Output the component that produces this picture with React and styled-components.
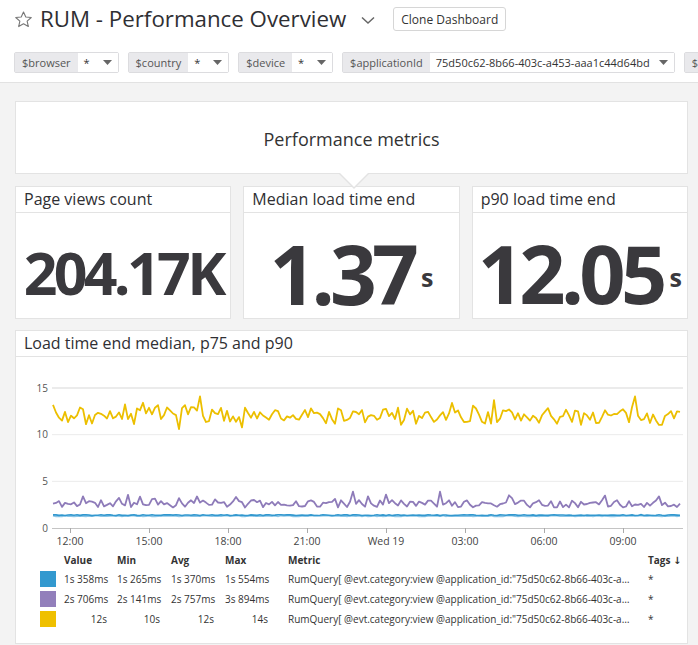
import React from 'react'
import styled, { createGlobalStyle } from 'styled-components'

const GlobalStyle = createGlobalStyle`
  html, body {
    margin: 0;
    padding: 0;
    background: #f3f3f3;
    font-family: "Open Sans", "DejaVu Sans", sans-serif;
    color: #333;
  }
  * { box-sizing: border-box; }
`

const Header = styled.header`
  background: #fff;
  border-bottom: 1px solid #e2e2e2;
  height: 83px;
  padding: 5px 0 0 14px;
  overflow: hidden;
`

const TitleRow = styled.div`
  display: flex;
  align-items: center;
  height: 28px;
`

const Title = styled.h1`
  margin: 0 0 0 7px;
  font-size: 22.3px;
  font-weight: 400;
  color: #2f2f33;
  line-height: 28px;
`

const Chevron = styled.svg`
  margin-left: 15px;
  margin-top: 2px;
`

const CloneButton = styled.button`
  margin-left: 18px;
  height: 24px;
  padding: 0 7px;
  background: #fff;
  border: 1px solid #d6d6d6;
  border-radius: 3px;
  font-family: inherit;
  font-size: 12px;
  color: #333;
`

const VarRow = styled.div`
  display: flex;
  gap: 9px;
  margin-top: 19px;
  white-space: nowrap;
`

const VarPill = styled.div`
  display: flex;
  flex-shrink: 0;
  height: 21px;
  border: 1px solid #dcdcdf;
  border-radius: 2px;
  font-size: 11px;
  line-height: 19px;
`

const VarLabel = styled.span`
  background: #e9e9ec;
  color: #555;
  padding: 0 7px;
`

const VarValue = styled.span`
  display: flex;
  align-items: center;
  width: ${p => p.$width}px;
  padding: 0 6px 0 6px;
  background: #fff;
  color: #333;
  svg { margin-left: auto; }
`

const Board = styled.main`
  padding: 18px 10px 4px 15px;
`

const Note = styled.div`
  position: relative;
  z-index: 2;
  height: 73px;
  background: #fff;
  border: 1px solid #e3e3e3;
  display: flex;
  align-items: center;
  justify-content: center;
  font-size: 18px;
  color: #333;
  padding-top: 2px;

  &::before, &::after {
    content: '';
    position: absolute;
    left: 322px;
    border-style: solid;
    border-color: transparent;
  }
  &::before {
    top: 100%;
    border-width: 16px 16px 0 16px;
    border-top-color: #e3e3e3;
  }
  &::after {
    top: calc(100% - 1px);
    left: 323px;
    border-width: 15px 15px 0 15px;
    border-top-color: #fff;
  }
`

const ValueGrid = styled.div`
  display: grid;
  grid-template-columns: repeat(3, 1fr);
  gap: 12px;
  margin-top: 12px;
`

const Widget = styled.section`
  background: #fff;
  border: 1px solid #e3e3e3;
  display: flex;
  flex-direction: column;
  height: ${p => p.$height}px;
  margin-top: ${p => p.$top || 0}px;
`

const WidgetTitle = styled.div`
  height: 26px;
  flex-shrink: 0;
  border-bottom: 1px solid #e3e3e3;
  padding: 0 8px;
  font-size: 16px;
  line-height: 25px;
  color: #2f2f33;
  white-space: nowrap;
`

const ValueArea = styled.div`
  flex: 1;
  display: flex;
  align-items: center;
  justify-content: center;
  padding-top: 14px;
  color: #3a393d;
  font-weight: 700;
`

const BigNumber = styled.span`
  font-size: ${p => p.$size}px;
  letter-spacing: ${p => p.$spacing}em;
  line-height: 1;
`

const Unit = styled.span`
  font-size: 25px;
  margin-left: 7px;
  line-height: 1;
  align-self: flex-end;
  margin-bottom: ${p => p.$bottom}px;
`

const Legend = styled.div`
  margin-top: 0;
  padding: 0 0 0 24px;
  font-size: 10px;
  color: #333;
`

const LegendRow = styled.div`
  display: grid;
  grid-template-columns: 24px 53px 54px 54px 63px 360px 40px;
  align-items: center;
  height: ${p => (p.$head ? 18 : 20)}px;
  font-weight: ${p => (p.$head ? 700 : 400)};
`

const Swatch = styled.span`
  width: 16px;
  height: 16px;
  background: ${p => p.$color};
`

const Num = styled.span`
  text-align: right;
  padding-right: ${p => p.$pad}px;
  white-space: nowrap;
`

const Head = styled.span`
  white-space: nowrap;
`

const MetricCell = styled.span`
  padding-right: 15px;
  overflow: hidden;
  text-overflow: ellipsis;
  white-space: nowrap;
`

function mulberry(seed) {
  return () => {
    seed |= 0
    seed = (seed + 0x6d2b79f5) | 0
    let t = Math.imul(seed ^ (seed >>> 15), 1 | seed)
    t = (t + Math.imul(t ^ (t >>> 7), 61 | t)) ^ t
    return ((t ^ (t >>> 14)) >>> 0) / 4294967296
  }
}

const X0 = 36
const X1 = 667
const ZERO = 171
const SCALE = 140 / 15

function series(seed, fn) {
  const r = mulberry(seed)
  const n = 210
  const pts = []
  for (let i = 0; i < n; i++) {
    const x = X0 + 1 + (i * (X1 - X0 - 4)) / (n - 1)
    const v = fn(r)
    pts.push(`${x.toFixed(1)},${(ZERO - v * SCALE).toFixed(1)}`)
  }
  return pts.join(' ')
}

const yellow = series(7, r => {
  let v = 12 + (r() - 0.5) * 1.9
  if (r() < 0.16) v += (r() - 0.35) * 3.4
  return Math.max(10.6, Math.min(14.1, v))
})
const purple = series(11, r => {
  let v = 2.6 + (r() - 0.5) * 0.8
  if (r() < 0.14) v += r() * 1.2
  return Math.max(1.9, Math.min(3.9, v))
})
const blueLight = series(3, r => 1.28 + (r() - 0.5) * 0.1)
const blue = series(5, r => 1.38 + (r() - 0.5) * 0.1)

const ticks = [
  [54, '12:00'], [133, '15:00'], [212, '18:00'], [291, '21:00'],
  [370, 'Wed 19'], [449, '03:00'], [528, '06:00'], [607, '09:00'],
]

const Chart = () => (
  <svg width="672" height="194" style={{ display: 'block' }}>
    {[15, 10, 5].map(v => (
      <line key={v} x1={X0} x2={X1} y1={ZERO - v * SCALE} y2={ZERO - v * SCALE}
        stroke="#ebebeb" strokeWidth={v === 15 ? 2 : 1} />
    ))}
    {[0, 5, 10, 15].map(v => (
      <text key={v} x="32" y={ZERO - v * SCALE + 3.5} textAnchor="end"
        fontSize="10" fill="#555" fontFamily="Open Sans">{v}</text>
    ))}
    <polyline points={blueLight} fill="none" stroke="#8cc5e6" strokeWidth="1.6" />
    <polyline points={blue} fill="none" stroke="#3298cf" strokeWidth="1.6" />
    <polyline points={purple} fill="none" stroke="#8e7bb9" strokeWidth="1.8" strokeLinejoin="round" />
    <polyline points={yellow} fill="none" stroke="#ecbf00" strokeWidth="1.8" strokeLinejoin="round" />
    <line x1={X0} x2={X1} y1={ZERO + 0.5} y2={ZERO + 0.5} stroke="#c4c4c4" />
    {ticks.map(([x, label]) => (
      <g key={label}>
        <line x1={x + 0.5} x2={x + 0.5} y1={ZERO} y2={ZERO + 5} stroke="#aaa" />
        <text x={x} y="188" textAnchor="middle" fontSize="10.5" fill="#444"
          fontFamily="Open Sans">{label}</text>
      </g>
    ))}
  </svg>
)

const Caret = () => (
  <svg width="9" height="5" viewBox="0 0 9 5"><path d="M0 0h9L4.5 5z" fill="#666" /></svg>
)

const metric = 'RumQuery[ @evt.category:view @application_id:"75d50c62-8b66-403c-a453-aaa1c44d64bd" ]'

const rows = [
  { color: '#3399cf', value: '1s 358ms', min: '1s 265ms', avg: '1s 370ms', max: '1s 554ms' },
  { color: '#927fbb', value: '2s 706ms', min: '2s 141ms', avg: '2s 757ms', max: '3s 894ms' },
  { color: '#efc000', value: '12s', min: '10s', avg: '12s', max: '14s' },
]

const vars = [
  { name: '$browser', value: '*', width: 40 },
  { name: '$country', value: '*', width: 40 },
  { name: '$device', value: '*', width: 40 },
  { name: '$applicationId', value: '75d50c62-8b66-403c-a453-aaa1c44d64bd', width: 244 },
  { name: '$page', value: '*', width: 40 },
]

export default function App() {
  return (
    <>
      <GlobalStyle />
      <Header>
        <TitleRow>
          <svg width="19" height="19" viewBox="0 0 24 24" fill="none" stroke="#777" strokeWidth="1.4" strokeLinejoin="round">
            <path d="M12 2.5l2.9 6.3 6.9.7-5.2 4.6 1.5 6.8L12 17.4l-6.1 3.5 1.5-6.8-5.2-4.6 6.9-.7z" />
          </svg>
          <Title>RUM - Performance Overview</Title>
          <Chevron width="14" height="9" viewBox="0 0 14 9">
            <path d="M1 1.5l6 5.5 6-5.5" fill="none" stroke="#666" strokeWidth="1.5" />
          </Chevron>
          <CloneButton>Clone Dashboard</CloneButton>
        </TitleRow>
        <VarRow>
          {vars.map(v => (
            <VarPill key={v.name}>
              <VarLabel>{v.name}</VarLabel>
              <VarValue $width={v.width}>{v.value}<Caret /></VarValue>
            </VarPill>
          ))}
        </VarRow>
      </Header>
      <Board>
        <Note>Performance metrics</Note>
        <ValueGrid>
          <Widget $height={133}>
            <WidgetTitle>Page views count</WidgetTitle>
            <ValueArea><BigNumber $size={59} $spacing={-0.062}>204.17K</BigNumber></ValueArea>
          </Widget>
          <Widget $height={133}>
            <WidgetTitle>Median load time end</WidgetTitle>
            <ValueArea>
              <BigNumber $size={82} $spacing={-0.06}>1.37</BigNumber>
              <Unit $bottom={28}>s</Unit>
            </ValueArea>
          </Widget>
          <Widget $height={133}>
            <WidgetTitle>p90 load time end</WidgetTitle>
            <ValueArea>
              <BigNumber $size={81} $spacing={-0.058}>12.05</BigNumber>
              <Unit $bottom={28}>s</Unit>
            </ValueArea>
          </Widget>
        </ValueGrid>
        <Widget $height={314} $top={11}>
          <WidgetTitle>Load time end median, p75 and p90</WidgetTitle>
          <Chart />
          <Legend>
            <LegendRow $head>
              <span />
              <Head>Value</Head>
              <Head>Min</Head>
              <Head>Avg</Head>
              <Head>Max</Head>
              <Head>Metric</Head>
              <Head>Tags ↓</Head>
            </LegendRow>
            {rows.map(r => (
              <LegendRow key={r.color}>
                <Swatch $color={r.color} />
                <Num $pad={10}>{r.value}</Num>
                <Num $pad={11}>{r.min}</Num>
                <Num $pad={11}>{r.avg}</Num>
                <Num $pad={20}>{r.max}</Num>
                <MetricCell>{metric}</MetricCell>
                <span>*</span>
              </LegendRow>
            ))}
          </Legend>
        </Widget>
      </Board>
    </>
  )
}
